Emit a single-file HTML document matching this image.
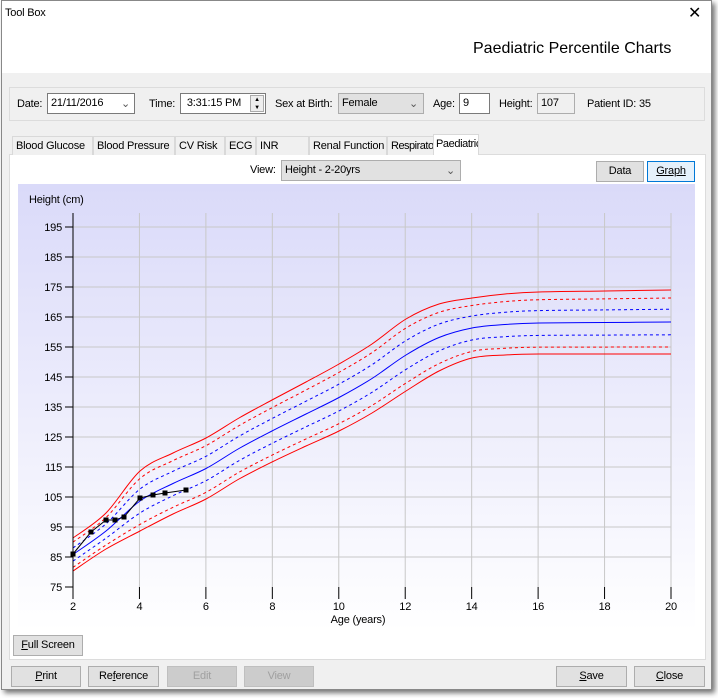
<!DOCTYPE html>
<html><head><meta charset="utf-8"><style>
*{box-sizing:border-box;margin:0;padding:0}
body{width:718px;height:698px;background:#fff;font-family:"Liberation Sans",sans-serif;font-size:11px;letter-spacing:-0.2px;color:#000;position:relative;overflow:hidden}
.win{position:absolute;left:1px;top:0;width:711px;height:690px;background:#f0f0f0;border:1px solid #888;box-shadow:3px 3px 5px rgba(0,0,0,.55)}
.title{position:absolute;left:0;top:0;width:100%;height:72px;background:#fff}
.abs{position:absolute;white-space:nowrap}
.box{position:absolute;background:#fff;border:1px solid #7a7a7a;height:21px;padding:3px 3px;white-space:nowrap;overflow:hidden}
.btn{position:absolute;height:21px;border:1px solid #adadad;background:#e1e1e1;text-align:center;line-height:19px}
.dis{color:#a0a0a0;background:#ccc;border-color:#bfbfbf}
.tab{position:absolute;top:135px;height:19px;border:1px solid #d9d9d9;border-bottom:none;background:#f0f0f0;padding:3px 3px;white-space:nowrap;overflow:hidden}
</style></head><body>
<div class="win">
<div class="title"></div>
<div class="abs" style="left:3px;top:6px">Tool Box</div>
<div class="abs" style="left:686px;top:2px;font-size:16px">✕</div>
<div class="abs" style="left:471px;top:39px;font-size:16px;letter-spacing:0">Paediatric Percentile Charts</div>
<div class="abs" style="left:7px;top:86px;width:696px;height:34px;border:1px solid #dcdcdc"></div>
<div class="abs" style="left:15px;top:97px">Date:</div>
<div class="box" style="left:45px;top:92px;width:88px">21/11/2016 <span style="position:absolute;right:4px;color:#555">⌄</span></div>
<div class="abs" style="left:147px;top:97px">Time:</div>
<div class="box" style="left:178px;top:92px;width:86px">&nbsp;3:31:15 PM<span style="position:absolute;right:1px;top:1px;width:14px;height:17px;border:1px solid #aaa;background:#eee;font-size:6px;line-height:8px;text-align:center">▲<br>▼</span></div>
<div class="abs" style="left:273px;top:97px">Sex at Birth:</div>
<div class="box" style="left:336px;top:92px;width:86px;background:#e1e1e1;border-color:#adadad">Female<span style="position:absolute;right:5px;color:#555">⌄</span></div>
<div class="abs" style="left:431px;top:97px">Age:</div>
<div class="box" style="left:457px;top:92px;width:31px">9</div>
<div class="abs" style="left:497px;top:97px">Height:</div>
<div class="box" style="left:535px;top:92px;width:38px;background:#f0f0f0;border-color:#adadad">107</div>
<div class="abs" style="left:585px;top:97px">Patient ID: 35</div>
<div class="abs" style="left:7px;top:153px;width:697px;height:506px;background:#fff;border:1px solid #dcdcdc"></div>
<div class="tab" style="left:10px;width:81px">Blood Glucose</div>
<div class="tab" style="left:91px;width:82px">Blood Pressure</div>
<div class="tab" style="left:173px;width:50px">CV Risk</div>
<div class="tab" style="left:223px;width:31px">ECG</div>
<div class="tab" style="left:254px;width:53px">INR</div>
<div class="tab" style="left:307px;width:78px">Renal Function</div>
<div class="tab" style="left:385px;width:47px;letter-spacing:-0.5px">Respiratory</div>
<div class="tab" style="left:431px;top:133px;height:21px;width:46px;background:#fff;padding:3px 2px;letter-spacing:-0.4px">Paediatric</div>
<div class="abs" style="left:248px;top:163px">View:</div>
<div class="box" style="left:279px;top:159px;width:180px;background:#e1e1e1;border-color:#adadad">Height - 2-20yrs<span style="position:absolute;right:5px;color:#555">⌄</span></div>
<div class="btn" style="left:594px;top:160px;width:48px">Data</div>
<div class="btn" style="left:645px;top:160px;width:48px;border-color:#0078d7;background:#e5f1fb"><u>Graph</u></div>
<svg class="abs" style="left:16px;top:183px" width="677" height="447">
<defs><linearGradient id="g" x1="0" y1="0" x2="0" y2="1"><stop offset="0" stop-color="#dadaf9"/><stop offset="1" stop-color="#ffffff"/></linearGradient></defs>
<rect width="677" height="447" fill="url(#g)"/>
<g id="grid" stroke="#c8c8c8" stroke-width="1"></g>
<g id="curves" fill="none"></g>
<text x="11" y="19" font-size="11" font-family="Liberation Sans">Height (cm)</text>
<text x="340" y="439" font-size="11" font-family="Liberation Sans" text-anchor="middle">Age (years)</text>
<g id="ax" font-size="11" font-family="Liberation Sans"></g>
</svg>
<div class="btn" style="left:11px;top:634px;width:70px"><u>F</u>ull Screen</div>
<div class="btn" style="left:9px;top:665px;width:70px"><u>P</u>rint</div>
<div class="btn" style="left:86px;top:665px;width:71px">Re<u>f</u>erence</div>
<div class="btn dis" style="left:165px;top:665px;width:70px">Edit</div>
<div class="btn dis" style="left:242px;top:665px;width:70px">View</div>
<div class="btn" style="left:554px;top:665px;width:71px"><u>S</u>ave</div>
<div class="btn" style="left:632px;top:665px;width:71px"><u>C</u>lose</div>
</div>
<script>
(function(){
var ox=16,oy=183,NS="http://www.w3.org/2000/svg";
function el(p,t,a,txt){var e=document.createElementNS(NS,t);for(var k in a)e.setAttribute(k,a[k]);if(txt!==undefined)e.textContent=txt;document.getElementById(p).appendChild(e);return e;}
var X=function(a){return 71+(a-2)*598/18-ox}, Y=function(h){return 586-(h-75)*3-oy};
for(var a=4;a<=20;a+=2)el("grid","line",{x1:X(a),x2:X(a),y1:212-oy,y2:586-oy});
for(var h=85;h<=195;h+=10)el("grid","line",{x1:X(2),x2:X(20),y1:Y(h),y2:Y(h)});
el("ax","line",{x1:X(2),x2:X(2),y1:212-oy,y2:586-oy,stroke:"#000"});
for(var h=75;h<=195;h+=10){el("ax","line",{x1:X(2)-8,x2:X(2),y1:Y(h),y2:Y(h),stroke:"#000"});el("ax","text",{x:X(2)-11,y:Y(h)+4,"text-anchor":"end"},h);}
for(var a=2;a<=20;a+=2){el("ax","line",{x1:X(a),x2:X(a),y1:586-oy,y2:598-oy,stroke:"#000"});el("ax","text",{x:X(a),y:609-oy,"text-anchor":"middle"},a);}
var xs=[71,104,138,171,204,237,270,304,337,370,404,437,470,503,537,603,669];
var topv=[537,512,470,452,437,417,399,381,363,343,318,303,297,293,291,290,289];
var botv=[570,548,530,513,498,478,461,445,430,412,390,370,357,354,353,353,353];
function path(fr){var pts=xs.map(function(x,i){return [x-ox,topv[i]+(botv[i]-topv[i])*fr-oy]});var d="M"+pts[0];for(var i=0;i<pts.length-1;i++){var p0=pts[Math.max(0,i-1)],p1=pts[i],p2=pts[i+1],p3=pts[Math.min(pts.length-1,i+2)];d+=" C"+(p1[0]+(p2[0]-p0[0])/6)+","+(p1[1]+(p2[1]-p0[1])/6)+" "+(p2[0]-(p3[0]-p1[0])/6)+","+(p2[1]-(p3[1]-p1[1])/6)+" "+p2;}return d;}
[[0,"#f00",""],[0.125,"#f00","3,3"],[0.3,"#00f","3,3"],[0.5,"#00f",""],[0.7,"#00f","3,3"],[0.89,"#f00","3,3"],[1,"#f00",""]].forEach(function(c){var a={d:path(c[0]),stroke:c[1]};if(c[2])a["stroke-dasharray"]=c[2];el("curves","path",a);});
var pd=[[71,553],[89,531],[104,519],[113,519],[122,516],[138,497],[151,494],[163,492],[184,489]];
el("curves","polyline",{points:pd.map(function(p){return (p[0]-ox)+","+(p[1]-oy)}).join(" "),stroke:"#000"});
pd.forEach(function(p){el("curves","rect",{x:p[0]-ox-2.5,y:p[1]-oy-2.5,width:5,height:5,fill:"#000"})});
})();
</script>
</body></html>
